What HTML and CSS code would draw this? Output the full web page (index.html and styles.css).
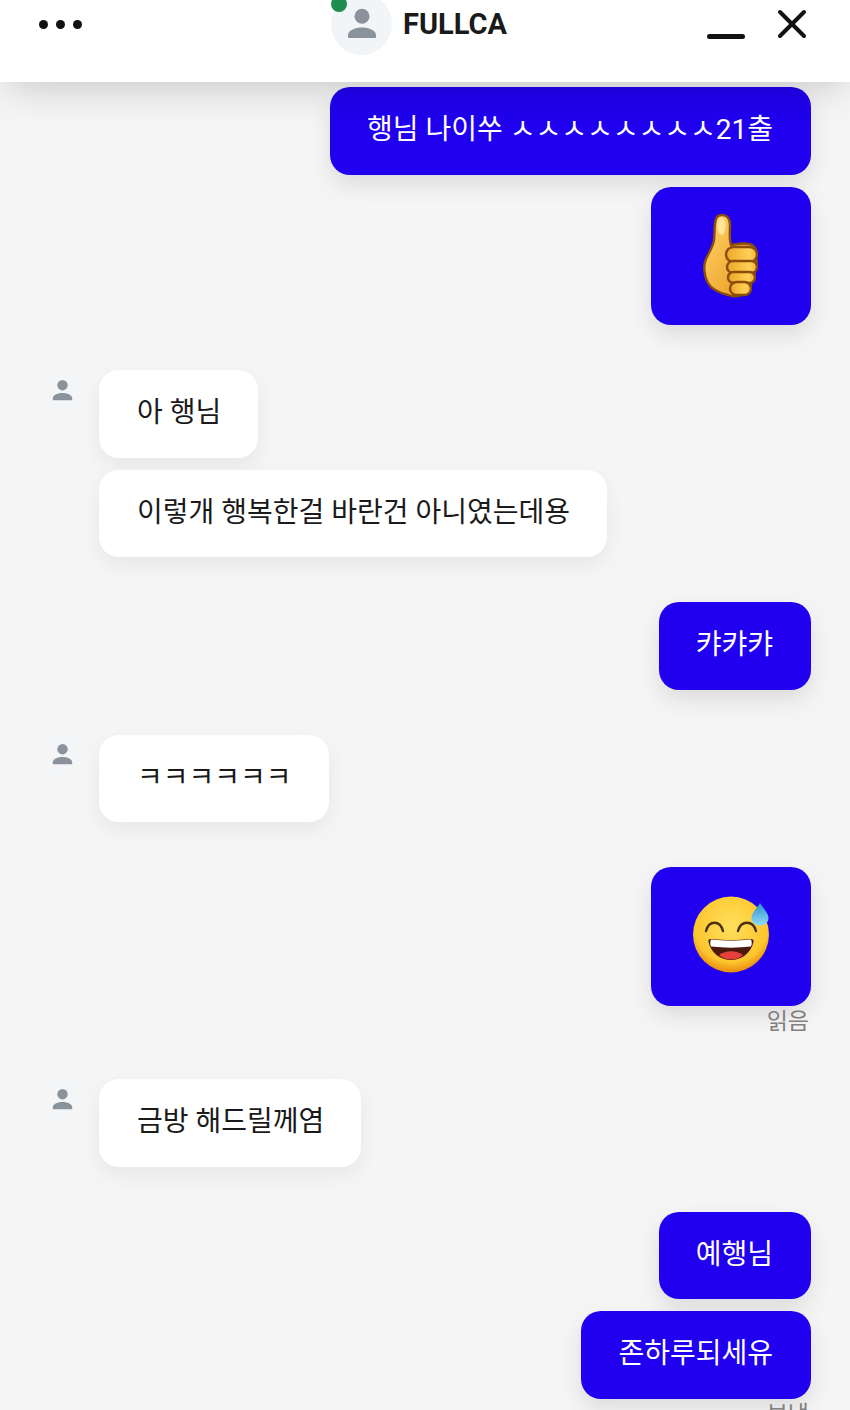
FILE: index.html
```html
<!DOCTYPE html>
<html lang="ko">
<head>
    <meta charset="UTF-8">
    <meta name="viewport" content="width=device-width, initial-scale=1.0">
    <title>FULLCA</title>
    <link rel="stylesheet" href="styles.css">
</head>
<body>
    <!-- Top bar -->
    <header class="top-bar">
        <div class="dots"><span></span><span></span><span></span></div>
        <div class="profile">
            <div class="avatar avatar-large">
                <svg viewBox="0 0 24 24" width="42" height="42"><circle cx="12" cy="7.600" r="4.300"/><path d="M4 20v-1.600c0-3 4.600-4.400 8-4.400s8 1.400 8 4.400V20z"/></svg>
                <span class="online"></span>
            </div>
            <span class="profile-name">FULLCA</span>
        </div>
        <div class="window-btns">
            <span class="minimize"></span>
            <svg class="close" viewBox="0 0 30 30" width="30" height="30"><path d="M3 3l24 24M27 3L3 27"/></svg>
        </div>
    </header>

    <main class="chat">
        <div class="msg me">행님 나이쑤 ㅅㅅㅅㅅㅅㅅㅅㅅ21출</div>
        <div class="msg me emoji">
            <!-- thumbs up -->
            <svg viewBox="0 0 56 84" width="56" height="84">
                <defs>
                    <linearGradient id="thumb" x1="0" y1="0" x2="1" y2="1">
                        <stop offset="0" stop-color="#ffd56a"/>
                        <stop offset="1" stop-color="#e8951a"/>
                    </linearGradient>
                    <linearGradient id="finger" x1="0" y1="0" x2="1" y2="0">
                        <stop offset="0" stop-color="#eea626"/>
                        <stop offset="0.75" stop-color="#ffcf58"/>
                        <stop offset="1" stop-color="#f5b233"/>
                    </linearGradient>
                </defs>
                <path d="M19 1C24 1 27 5 27 11 27 18 26 25 28 31 34 30 44 28 49 31 54 34 54 40 52 43 55 47 54 53 51 55 53 59 51 64 48 66 49 71 47 76 43 78 38 83 30 83 25 81 17 79 9 76 5 69 1 62 0 52 3 45 6 38 10 33 11 26 12 18 11 10 13 5 14 2 16 1 19 1Z" fill="url(#thumb)" stroke="#8a4d0c" stroke-width="2.400"/>
                <rect x="23" y="33" width="31" height="15" rx="7.500" fill="url(#finger)" stroke="#8a4d0c" stroke-width="2.400"/>
                <rect x="24" y="47" width="30" height="12" rx="6" fill="url(#finger)" stroke="#8a4d0c" stroke-width="2.400"/>
                <rect x="25" y="58" width="27" height="11" rx="5.500" fill="url(#finger)" stroke="#8a4d0c" stroke-width="2.400"/>
                <rect x="27" y="68" width="21" height="13" rx="6.500" fill="url(#finger)" stroke="#8a4d0c" stroke-width="2.400"/>
                <ellipse cx="18.500" cy="12" rx="4" ry="9" fill="#ffe59c"/>
            </svg>
        </div>

        <div class="msg-group">
            <div class="avatar avatar-small">
                <svg viewBox="0 0 24 24" width="29" height="29"><circle cx="12" cy="7.600" r="4.300"/><path d="M4 20v-1.600c0-3 4.600-4.400 8-4.400s8 1.400 8 4.400V20z"/></svg>
            </div>
            <div class="msg-list">
                <div class="msg you">아 행님</div>
                <div class="msg you">이렇개 행복한걸 바란건 아니였는데용</div>
            </div>
        </div>

        <div class="msg me solo">캬캬캬</div>

        <div class="msg-group">
            <div class="avatar avatar-small">
                <svg viewBox="0 0 24 24" width="29" height="29"><circle cx="12" cy="7.600" r="4.300"/><path d="M4 20v-1.600c0-3 4.600-4.400 8-4.400s8 1.400 8 4.400V20z"/></svg>
            </div>
            <div class="msg-list">
                <div class="msg you">ㅋㅋㅋㅋㅋㅋ</div>
            </div>
        </div>

        <div class="msg me emoji solo">
            <!-- grinning face with sweat -->
            <svg viewBox="0 0 80 80" width="80" height="80">
                <defs>
                    <radialGradient id="face" cx="0.5" cy="0.38" r="0.62">
                        <stop offset="0" stop-color="#ffe05c"/>
                        <stop offset="0.78" stop-color="#fdc62e"/>
                        <stop offset="1" stop-color="#e88a0e"/>
                    </radialGradient>
                    <linearGradient id="drop" x1="0" y1="0" x2="0" y2="1">
                        <stop offset="0" stop-color="#2f8fd0"/>
                        <stop offset="1" stop-color="#8fdcf5"/>
                    </linearGradient>
                </defs>
                <circle cx="40" cy="38.500" r="38" fill="url(#face)"/>
                <path d="M15 35c3-11 14-11 17 0M47 35c3-11 15-11 18 0" fill="none" stroke="#4a3010" stroke-width="2.400" stroke-linecap="round"/>
                <path d="M20 43c13 1.500 27 1.500 40 0 2 0 3 1 2.500 3-2.500 11-12 18-22.500 18s-20-7-22.500-18c-.5-2 .5-3 2.500-3z" fill="#4a1a0a"/>
                <path d="M20 43.500c13 1.500 27 1.500 40 0 1 2 1 5 0 7-13 1.500-27 1.500-40 0-1-2-1-5 0-7z" fill="#fff"/>
                <path d="M28 59c7-5 17-5 24 0-6 6-18 6-24 0z" fill="#e5403c"/>
                <path d="M69 7c3 5 8.500 10 8.500 15 0 4.500-3.800 7.500-8.500 7.500s-8.500-3-8.500-7.500c0-5 5.500-10 8.500-15z" fill="url(#drop)"/>
            </svg>
        </div>
        <div class="read-mark">읽음</div>

        <div class="msg-group after-mark">
            <div class="avatar avatar-small">
                <svg viewBox="0 0 24 24" width="29" height="29"><circle cx="12" cy="7.600" r="4.300"/><path d="M4 20v-1.600c0-3 4.600-4.400 8-4.400s8 1.400 8 4.400V20z"/></svg>
            </div>
            <div class="msg-list">
                <div class="msg you">금방 해드릴께염</div>
            </div>
        </div>

        <div class="msg me solo">예행님</div>
        <div class="msg me">존하루되세유</div>
        <div class="sent-mark">보냄</div>
    </main>
</body>
</html>
```

FILE: styles.css
```css
/* General page styling */
body {
    margin: 0;
    height: 1410px;
    overflow: hidden;
    background-color: #f5f5f6;
    color: #1a1a1a;
    font-family: Roboto, "Noto Sans CJK KR", sans-serif;
}

/* Top bar */
.top-bar {
    position: relative;
    z-index: 2;
    display: grid;
    grid-template-columns: 293px 1fr auto;
    height: 82px;
    padding: 0 43px 0 38px;
    box-sizing: border-box;
    background-color: #fff;
    box-shadow: 0 12px 40px -8px rgba(0, 0, 0, 0.2);
}

.dots {
    display: flex;
    gap: 8px;
    height: 48px;
    padding-left: 1px;
    align-items: center;
}

.dots span {
    width: 9px;
    height: 9px;
    border-radius: 50%;
    background-color: #111;
}

.profile {
    display: flex;
    align-items: flex-start;
    gap: 11px;
}

.profile-name {
    font-size: 29px;
    font-weight: 700;
    line-height: 48px;
    color: #1a1a1a;
}

.avatar {
    position: relative;
    display: flex;
    align-items: center;
    justify-content: center;
    flex-shrink: 0;
    border-radius: 50%;
    background-color: #f1f5f8;
}

.avatar svg {
    fill: #8a939b;
}

.avatar-large {
    width: 61px;
    height: 62px;
    margin-top: -7px;
}

.avatar-small {
    width: 44px;
    height: 44px;
    margin-top: -2px;
    background-color: #f4f5f7;
}

.online {
    position: absolute;
    top: 3px;
    left: 0;
    width: 16px;
    height: 16px;
    border-radius: 50%;
    background-color: #1e8e50;
}

.window-btns {
    display: flex;
    gap: 32px;
    height: 48px;
    align-items: center;
}

.minimize {
    display: block;
    width: 38px;
    height: 5px;
    margin-top: 24px;
    border-radius: 3px;
    background-color: #111;
}

.close {
    fill: none;
    stroke: #111;
    stroke-width: 4;
    stroke-linecap: round;
}

/* Chat messages */
.chat {
    display: flex;
    flex-direction: column;
    padding: 5px 39px 0 40px;
}

.msg {
    font-size: 28px;
    line-height: 39.5px;
    padding: 23px 37px 25px 38px;
    border-radius: 20px;
    width: fit-content;
    box-sizing: border-box;
}

.msg + .msg {
    margin-top: 12px;
}

.me {
    align-self: flex-end;
    padding-left: 37px;
    padding-right: 38px;
    color: #fff;
    background-color: #2000ee;
    box-shadow: 0 10px 22px rgba(0, 0, 0, 0.1);
}

.you {
    background-color: #fff;
    box-shadow: 0 8px 20px rgba(0, 0, 0, 0.06);
}

.emoji {
    display: flex;
    align-items: center;
    justify-content: center;
    width: 160px;
    height: 138.5px;
    padding: 0;
}

.msg-group {
    display: flex;
    gap: 15px;
    margin-top: 45px;
}

.msg-group.after-mark {
    margin-top: 42.5px;
}

.msg-list {
    display: flex;
    flex-direction: column;
}

.msg.solo {
    margin-top: 45px;
}

.read-mark,
.sent-mark {
    align-self: flex-end;
    margin-top: 1px;
    padding-right: 2px;
    font-size: 23px;
    line-height: 30px;
    color: #808080;
}
```
